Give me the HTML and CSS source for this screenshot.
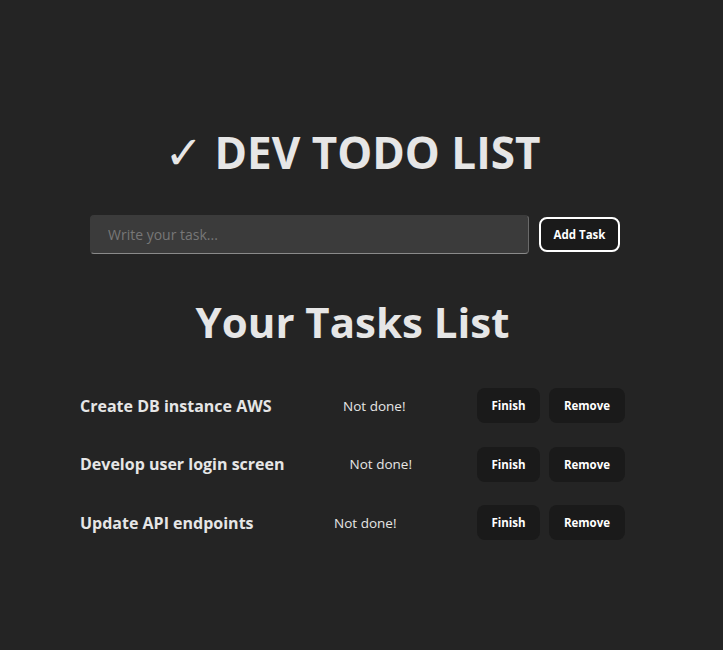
FILE: index.html
```html
<!DOCTYPE html>
<html lang="en">
<head>
<meta charset="utf-8">
<title>Dev Todo List</title>
<link rel="stylesheet" href="styles.css">
</head>
<body>
<div class="app">
  <h1 class="title"><span class="check">✓</span> DEV TODO LIST</h1>
  <form class="add-form">
    <input class="task-input" type="text" placeholder="Write your task...">
    <button class="add-btn" type="button">Add Task</button>
  </form>
  <h2 class="subtitle">Your Tasks List</h2>
  <ul class="tasks">
    <li class="task">
      <span class="task-name">Create DB instance AWS</span>
      <span class="task-status">Not done!</span>
      <div class="task-actions">
        <button class="btn btn-finish" type="button">Finish</button>
        <button class="btn btn-remove" type="button">Remove</button>
      </div>
    </li>
    <li class="task">
      <span class="task-name">Develop user login screen</span>
      <span class="task-status">Not done!</span>
      <div class="task-actions">
        <button class="btn btn-finish" type="button">Finish</button>
        <button class="btn btn-remove" type="button">Remove</button>
      </div>
    </li>
    <li class="task">
      <span class="task-name">Update API endpoints</span>
      <span class="task-status">Not done!</span>
      <div class="task-actions">
        <button class="btn btn-finish" type="button">Finish</button>
        <button class="btn btn-remove" type="button">Remove</button>
      </div>
    </li>
  </ul>
</div>
</body>
</html>
```

FILE: styles.css
```css
* { box-sizing: border-box; }
html, body { margin: 0; }
body {
  background: #242424;
  color: rgba(255, 255, 255, 0.87);
  font-family: "Open Sans", "Noto Sans", sans-serif;
  min-height: 650px;
  padding-right: 18px;
}
.app {
  width: 545px;
  margin: 0 auto;
  padding-top: 124px;
  display: flex;
  flex-direction: column;
  align-items: center;
}
.title {
  margin: 0;
  font-size: 44px;
  line-height: 56px;
  font-weight: 700;
  color: #e6e6e6;
}
.check {
  font-family: "DejaVu Sans", sans-serif;
  font-weight: 700;
  font-size: 46px;
}
.add-form {
  margin-top: 34px;
  display: flex;
  align-items: center;
  gap: 10px;
  margin-left: 10px;
  align-self: flex-start;
  width: 530px;
}
.task-input {
  flex: 1;
  height: 39px;
  background: #3b3b3b;
  border: 1px solid #3b3b3b;
  border-bottom-color: #8a8a8a;
  border-right-color: #6a6a6a;
  border-radius: 4px;
  padding: 0 17px;
  font-family: inherit;
  font-size: 14px;
  color: #e6e6e6;
  outline: none;
}
.task-input::placeholder { color: #777; }
.add-btn {
  width: 81px;
  height: 35px;
  background: #1a1a1a;
  border: 2px solid #fff;
  border-radius: 8px;
  color: #fff;
  font-family: inherit;
  font-weight: 700;
  font-size: 11.5px;
  padding: 0;
}
.subtitle {
  margin: 40px 0 0;
  font-size: 42px;
  line-height: 56px;
  font-weight: 700;
  color: #e6e6e6;
}
.tasks {
  list-style: none;
  margin: 38px 0 0;
  padding: 0;
  width: 545px;
  display: flex;
  flex-direction: column;
  gap: 23.5px;
}
.task {
  display: flex;
  align-items: center;
  justify-content: space-between;
}
.task-name {
  font-weight: 700;
  font-size: 16px;
  color: #e6e6e6;
}
.task-status {
  font-size: 13.5px;
  color: #e6e6e6;
}
.task-actions {
  display: flex;
  gap: 9px;
}
.btn {
  height: 35px;
  background: #1a1a1a;
  border: none;
  border-radius: 8px;
  color: #fff;
  font-family: inherit;
  font-weight: 700;
  font-size: 11.5px;
  padding: 0;
}
.btn-finish { width: 63px; }
.btn-remove { width: 76px; }
```
